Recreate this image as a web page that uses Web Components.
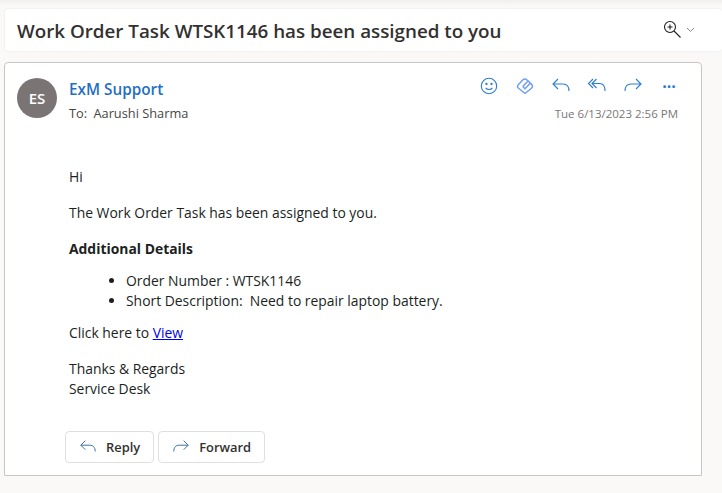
<!DOCTYPE html>
<html>
<head>
<meta charset="utf-8">
<title>Work Order Task</title>
<style>
    html, body { margin: 0; height: 100%; }
    body {
        background: #faf9f8;
        font-family: "Open Sans", "Noto Sans", sans-serif;
        color: #201f1e;
        overflow: hidden;
    }
    mail-message ul { margin: 0 0 12px; padding-left: 57px; }
    mail-message a { color: #0000ee; }
</style>
</head>
<body>
<mail-page>
    <mail-subject>Work Order Task WTSK1146 has been assigned to you</mail-subject>
    <mail-message sender="ExM Support" initials="ES" to="Aarushi Sharma" date="Tue 6/13/2023 2:56 PM">
        <p>Hi</p>
        <p>The Work Order Task has been assigned to you.</p>
        <p class="tight"><b>Additional Details</b></p>
        <ul>
            <li>Order Number : WTSK1146</li>
            <li>Short Description:&nbsp; Need to repair laptop battery.</li>
        </ul>
        <p>Click here to <a href="#">View</a></p>
        <p>Thanks &amp; Regards<br>Service Desk</p>
    </mail-message>
</mail-page>

<script>
const ICONS = {
    smile: '<circle cx="10" cy="10" r="7.700"/><path d="M6.600 11.800c1.700 2.200 5.100 2.200 6.800 0"/><circle cx="7.500" cy="8" r=".6" fill="currentColor"/><circle cx="12.500" cy="8" r=".6" fill="currentColor"/>',
    praise: '<g stroke="#6f9ff0" stroke-width="1.500"><path d="M10 17.500 3.300 12a2 2 0 0 1 0-3.200L7.700 4a3 3 0 0 1 4.300 0l1 1-5.300 5.500"/><path d="M10 17.500l6.700-5.500a2.300 2.300 0 0 0 .1-3.400l-3.400-3.300a2 2 0 0 0-.4-.3"/><path d="M7.700 10.500l2.300 2.200 5.200-5.500"/></g>',
    reply: '<path d="M7 3 2 8l5 5M2 8h10c4 0 6 2.600 6 7"/>',
    replyAll: '<path d="M6 3 1.500 7.500 6 12M9.500 3 5 7.500 9.500 12M5 7.500h7.500c3.700 0 5.500 2.800 5.500 7.500"/>',
    forward: '<path d="M13 3l5 5-5 5M18 8H8c-4 0-6 2.600-6 7"/>'
}
const svg = (name, size) => `<svg width="${size}" height="${size}" viewBox="0 0 20 20" fill="none" stroke="currentColor" stroke-width="1.100">${ICONS[name]}</svg>`

class MailPage extends HTMLElement {
    constructor() {
        super()
        this.attachShadow({ mode: 'open' }).innerHTML = `
            <style>
                :host {
                    display: flex;
                    flex-direction: column;
                    gap: 10px;
                    padding: 8px 0 0 4px;
                    height: 493px;
                    box-sizing: border-box;
                    background: linear-gradient(#f0efee, #faf9f8 6px);
                }
            </style>
            <slot></slot>`
    }
}

class MailSubject extends HTMLElement {
    constructor() {
        super()
        this.attachShadow({ mode: 'open' }).innerHTML = `
            <style>
                :host {
                    display: flex;
                    align-items: center;
                    justify-content: space-between;
                    height: 44px;
                    box-sizing: border-box;
                    padding: 1px 27px 0 12px;
                    background: #fff;
                    border: 1px solid #f3f2f1;
                    border-right: 0;
                    border-radius: 4px;
                    font-size: 18.800px;
                    font-weight: 600;
                    color: #323130;
                    white-space: nowrap;
                }
                .zoom { display: flex; align-items: center; gap: 4px; color: #201f1e; margin-top: -3px; }
                .zoom svg { display: block; }
            </style>
            <span><slot></slot></span>
            <span class="zoom">
                <svg width="19" height="19" viewBox="0 0 19 19" fill="none" stroke="currentColor" stroke-width="1.100">
                    <circle cx="7" cy="7" r="5.500"/><path d="M4.500 7h5M7 4.500v5"/><path d="M11 11l6.500 6.500"/>
                </svg>
                <svg width="9" height="9" viewBox="0 0 9 9" fill="none" stroke="#8a8886"><path d="M1 3l3.500 3.500L8 3"/></svg>
            </span>`
    }
}

class ActionIcon extends HTMLElement {
    connectedCallback() {
        if (this.shadowRoot) return
        this.attachShadow({ mode: 'open' }).innerHTML = `
            <style>
                :host { display: block; width: 36px; height: 20px; color: #2b7cd3; }
                svg { display: block; margin: 0 auto; }
            </style>
            ${svg(this.getAttribute('name'), 20)}`
    }
}

class MailButton extends HTMLElement {
    connectedCallback() {
        if (this.shadowRoot) return
        this.attachShadow({ mode: 'open' }).innerHTML = `
            <style>
                :host {
                    display: inline-flex;
                    align-items: center;
                    gap: 9px;
                    height: 32px;
                    box-sizing: border-box;
                    padding: 0 13px;
                    background: #fff;
                    border: 1px solid #e1dfdd;
                    border-radius: 4px;
                    font-size: 12.900px;
                    font-weight: 600;
                    color: #323130;
                }
                svg { display: block; color: #3f6f9f; }
            </style>
            ${svg(this.getAttribute('icon'), 18)}
            <slot></slot>`
    }
}

class MailMessage extends HTMLElement {
    connectedCallback() {
        if (this.shadowRoot) return
        const attr = n => this.getAttribute(n)
        this.attachShadow({ mode: 'open' }).innerHTML = `
            <style>
                :host {
                    display: flex;
                    flex-direction: column;
                    width: 698px;
                    height: 414px;
                    box-sizing: border-box;
                    background: #fff;
                    border: 1px solid #c8c6c4;
                    border-radius: 4px 4px 0 0;
                }
                header { display: flex; padding: 15px 14px 0 12px; }
                .avatar {
                    width: 40px; height: 40px; border-radius: 50%;
                    background: #7a7574; color: #fff;
                    display: flex; align-items: center; justify-content: center;
                    font-size: 15px; font-weight: 600;
                }
                .who { flex: 1; margin: -1px 0 0 12px; }
                .sender { font-size: 15.300px; font-weight: 600; color: #1f6fc4; line-height: 24px; }
                .to { font-size: 12.800px; color: #484644; line-height: 22px; margin-top: 1px; }
                .to span { margin-left: 3px; }
                .right { display: flex; flex-direction: column; align-items: flex-end; margin-top: -2px; }
                .actions { display: flex; }
                .date { font-size: 11.500px; color: #797775; line-height: 16px; margin: 10px 9px 0 0; }
                .body { flex: 1; padding: 43px 0 0 64px; font-size: 13.900px; line-height: 20px; color: #201f1e; }
                ::slotted(p) { margin: 0 0 16px; }
                ::slotted(p.tight) { margin-bottom: 12px; }
                footer { display: flex; gap: 4px; padding: 0 0 12px 60px; }
                .more { width: 36px; text-align: center; color: #2b7cd3; font-size: 16px; line-height: 20px; font-weight: 700; }
            </style>
            <header>
                <div class="avatar">${attr('initials')}</div>
                <div class="who">
                    <div class="sender">${attr('sender')}</div>
                    <div class="to">To: <span>${attr('to')}</span></div>
                </div>
                <div class="right">
                    <div class="actions">
                        <action-icon name="smile"></action-icon>
                        <action-icon name="praise"></action-icon>
                        <action-icon name="reply"></action-icon>
                        <action-icon name="replyAll"></action-icon>
                        <action-icon name="forward"></action-icon>
                        <div class="more">···</div>
                    </div>
                    <div class="date">${attr('date')}</div>
                </div>
            </header>
            <div class="body"><slot></slot></div>
            <footer>
                <mail-button icon="reply">Reply</mail-button>
                <mail-button icon="forward">Forward</mail-button>
            </footer>`
    }
}

customElements.define('mail-page', MailPage)
customElements.define('mail-subject', MailSubject)
customElements.define('action-icon', ActionIcon)
customElements.define('mail-button', MailButton)
customElements.define('mail-message', MailMessage)
</script>
</body>
</html>
